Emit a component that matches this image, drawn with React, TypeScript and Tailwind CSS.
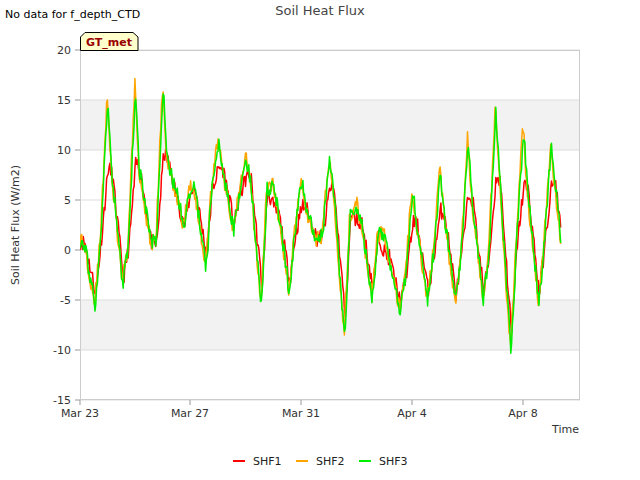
import React from "react";

const X0 = 80, PX = 27.72, Y0 = 250, PY = 10;
const peaks = [1, 15, 16, 16, 6.5, 11, 9, 6.5, 7.3, 9, 4.5, 1.5, 6, 8, 11, 13.5, 12, 10.5, 10];
const troughs = [0, -5.5, -3.5, 1, 5, -2, 2, -6, -4, 1, -9, -5, -6, -5, -5.5, -5, -10.5, -5.5, -4];
const base = [0.5, 0, 0, 2, 5.5, 5, 5.5, 1, 1, 3, 1, -3, -1, -1, -1, 0, 0, 2, 1];

function rnd(seed: number) {
  let s = seed;
  return () => {
    s = (s * 16807) % 2147483647;
    return s / 2147483647 - 0.5;
  };
}

function series(scaleP: number, scaleT: number, seed: number, shift: number) {
  const r = rnd(seed);
  const pts: [number, number][] = [];
  for (let d = 0; d < 18; d++) {
    pts.push([d + 0.0 + shift, base[d] + (peaks[d] - base[d]) * scaleP]);
    pts.push([d + 0.15 + shift, (peaks[d] + base[d]) / 2]);
    pts.push([d + 0.55 + shift, base[d] + (troughs[d + 1] - base[d]) * scaleT]);
    pts.push([d + 0.75 + shift, base[d] + 0.5]);
  }
  pts.push([18 + shift, peaks[18] * scaleP]);
  pts.push([18.3, 1]);
  const out: string[] = [];
  for (let t = 0; t <= 17.35; t += 0.03) {
    let i = 0;
    while (i < pts.length - 2 && pts[i + 1][0] < t) i++;
    const [ta, va] = pts[i], [tb, vb] = pts[i + 1];
    const f = Math.min(1, Math.max(0, (t - ta) / (tb - ta || 1)));
    const v = va + (vb - va) * f + r() * 1.6;
    out.push(`${(X0 + t * PX).toFixed(1)},${(Y0 - v * PY).toFixed(1)}`);
  }
  return out.join(" ");
}

const s1 = series(0.55, 0.8, 11, 0.02);
const s2 = series(1.05, 0.95, 29, -0.02);
const s3 = series(1.0, 1.0, 47, 0);

const yt = [20, 15, 10, 5, 0, -5, -10, -15];
const xt: [string, number][] = [["Mar 23", 80], ["Mar 27", 190], ["Mar 31", 301], ["Apr 4", 412], ["Apr 8", 523]];

export default function App() {
  return (
    <div className="relative w-[640px] h-[480px] bg-white" style={{ fontFamily: "'DejaVu Sans', sans-serif" }}>
      <svg width="640" height="480" className="block" fontFamily="DejaVu Sans, sans-serif">
        <rect x="80" y="100" width="500" height="50" fill="#f2f2f2" />
        <rect x="80" y="300" width="500" height="50" fill="#f2f2f2" />
        {yt.map((v) => (
          <g key={v}>
            <line x1="80" x2="580" y1={Y0 - v * PY} y2={Y0 - v * PY} stroke="#dddddd" strokeWidth="1" />
            <line x1="75" x2="80" y1={Y0 - v * PY} y2={Y0 - v * PY} stroke="#999" />
            <text x="71" y={Y0 - v * PY + 4} fontSize="11" textAnchor="end" fill="#333">{v}</text>
          </g>
        ))}
        {xt.map(([l, x]) => (
          <g key={l}>
            <line x1={x} x2={x} y1="400" y2="405" stroke="#999" />
            <text x={x} y="417" fontSize="11" textAnchor="middle" fill="#333">{l}</text>
          </g>
        ))}
        <rect x="80.5" y="50.5" width="499" height="349" fill="none" stroke="#cccccc" />
        <defs>
          <clipPath id="c"><rect x="80" y="50" width="500" height="350" /></clipPath>
        </defs>
        <g clipPath="url(#c)" fill="none" strokeWidth="1.5" strokeLinejoin="round">
          <polyline points={s1} stroke="#ff0000" />
          <polyline points={s2} stroke="#ffa500" />
          <polyline points={s3} stroke="#00ee00" />
        </g>
        <text x="320" y="15" fontSize="13" textAnchor="middle" fill="#444">Soil Heat Flux</text>
        <text x="579" y="433" fontSize="11" textAnchor="end" fill="#333">Time</text>
        <text x="19" y="225" fontSize="11" textAnchor="middle" fill="#333" transform="rotate(-90 19 225)">Soil Heat Flux (W/m2)</text>
        <path d="M80.5 50.5 V37 L85 32.5 H133 L138 37 V50.5 Z" fill="#ffffcc" stroke="#000" strokeWidth="1" />
        <text x="109" y="46" fontSize="11" fontWeight="bold" textAnchor="middle" fill="#990000">GT_met</text>
        <line x1="233" x2="245" y1="461" y2="461" stroke="#ff0000" strokeWidth="2" />
        <text x="253" y="465" fontSize="11" fill="#222">SHF1</text>
        <line x1="296" x2="308" y1="461" y2="461" stroke="#ffa500" strokeWidth="2" />
        <text x="316" y="465" fontSize="11" fill="#222">SHF2</text>
        <line x1="359" x2="371" y1="461" y2="461" stroke="#00ee00" strokeWidth="2" />
        <text x="379" y="465" fontSize="11" fill="#222">SHF3</text>
      </svg>
      <div className="absolute left-[5px] top-[7px] text-[11px] text-black">No data for f_depth_CTD</div>
    </div>
  );
}
